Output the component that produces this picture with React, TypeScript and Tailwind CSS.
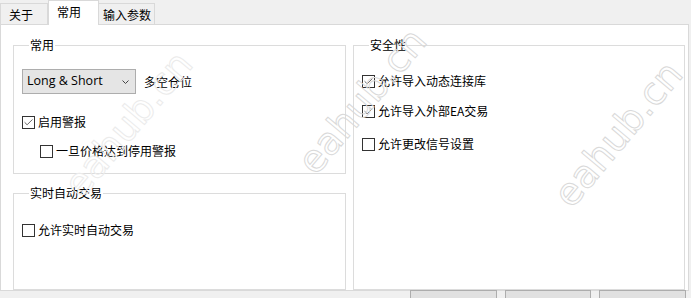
import { Check } from 'lucide-react'

const CJK = "font-['Microsoft_YaHei','Noto_Sans_CJK_SC',sans-serif]"

function Box({ checked, label, className = '' }: { checked?: boolean; label: string; className?: string }) {
  return (
    <div className={`flex items-center h-[16px] gap-[3px] ${className}`}>
      <span className="w-[13px] h-[13px] border border-[#333333] bg-white flex items-center justify-center">
        {checked && <Check size={11} strokeWidth={1.5} className="text-[#222222]" />}
      </span>
      <span className="text-[12px] leading-[16px] text-black">{label}</span>
    </div>
  )
}

function Group({ title, className = '', children }: { title: string; className?: string; children: React.ReactNode }) {
  return (
    <fieldset className={`border border-[#dcdcdc] px-[8px] ${className}`}>
      <legend className="ml-[7px] px-[1px] text-[12px] leading-[16px] text-black">{title}</legend>
      {children}
    </fieldset>
  )
}

// faint diagonal watermark drawn over the dialog
function Watermark({ className }: { className: string }) {
  return (
    <div
      className={`absolute pointer-events-none select-none text-[38px] leading-none text-transparent font-['DejaVu_Sans',sans-serif] -rotate-[50deg] ${className}`}
    >
      eahub.cn
    </div>
  )
}

export default function App() {
  return (
    <div className={`relative w-[691px] h-[298px] overflow-hidden bg-[#f0f0f0] flex flex-col ${CJK}`}>
      {/* Tabs */}
      <div className="flex items-end h-[24px] text-[12px] text-black">
        <div className="w-[48px] h-[21px] border border-b-0 border-[#d9d9d9] flex items-center pl-[8px] pt-[1px]">关于</div>
        <div className="relative z-10 -mb-px w-[51px] h-[25px] bg-white border border-b-0 border-[#d9d9d9] flex items-start pl-[8px] pt-[2px]">常用</div>
        <div className="w-[56px] h-[21px] border border-b-0 border-l-0 border-[#d9d9d9] flex items-center pl-[4px] pt-[1px]">输入参数</div>
      </div>

      {/* Panel */}
      <div className="w-[689px] h-[269px] bg-white border border-[#d9d9d9] flex gap-[7px] pl-[12px] pt-[12px]">
        <div className="flex flex-col gap-[11px]">
          <Group title="常用" className="w-[333px] h-[137px]">
            <div className="flex items-center mt-[16px] gap-[8px]">
              <div className="w-[114px] h-[25px] bg-[#e5e5e5] border border-[#adadad] flex items-center justify-between pl-[4px] pr-[6px]">
                <span className="text-[12.5px] font-['Segoe_UI','Open_Sans',sans-serif] text-black">Long &amp; Short</span>
                <svg width="7" height="4" viewBox="0 0 7 4" className="mt-px">
                  <path d="M0.5 0.5 L3.5 3.5 L6.5 0.5" fill="none" stroke="#444" strokeWidth="1" />
                </svg>
              </div>
              <span className="text-[12px] text-black">多空仓位</span>
            </div>
            <Box checked label="启用警报" className="mt-[20px]" />
            <Box label="一旦价格达到停用警报" className="mt-[13px] ml-[18px]" />
          </Group>
          <Group title="实时自动交易" className="w-[333px] h-[105px]">
            <Box label="允许实时自动交易" className="mt-[21px]" />
          </Group>
        </div>
        <Group title="安全性" className="w-[332px] h-[253px]">
          <Box checked label="允许导入动态连接库" className="mt-[20px]" />
          <Box checked label="允许导入外部EA交易" className="mt-[14px]" />
          <Box label="允许更改信号设置" className="mt-[17px]" />
        </Group>
      </div>

      {/* Buttons */}
      <div className="flex justify-end gap-[8px] pr-[5px] -mt-[1px]">
        <div className="w-[87px] h-[26px] bg-[#e1e1e1] border border-[#adadad]" />
        <div className="w-[86px] h-[26px] bg-[#e1e1e1] border border-[#adadad]" />
        <div className="w-[87px] h-[26px] bg-[#e1e1e1] border border-[#adadad]" />
      </div>

      <Watermark className="left-[40px] top-[105px] [-webkit-text-stroke:1px_#ebebeb]" />
      <Watermark className="left-[274px] top-[82px] [-webkit-text-stroke:1px_#d9d9d9]" />
      <Watermark className="left-[530px] top-[115px] [-webkit-text-stroke:1px_#d9d9d9]" />
    </div>
  )
}
